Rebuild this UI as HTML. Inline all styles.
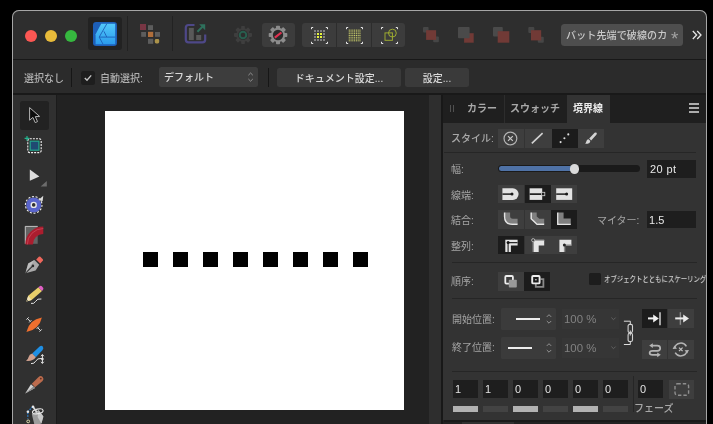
<!DOCTYPE html>
<html lang="ja">
<head>
<meta charset="utf-8">
<title>Affinity Designer</title>
<style>
html,body{margin:0;padding:0;background:#000;}
body{width:713px;height:424px;overflow:hidden;position:relative;font-family:"Liberation Sans","Noto Sans CJK JP",sans-serif;font-size:10px;color:#b8b8b8;-webkit-font-smoothing:antialiased;}
.abs,.abs *{position:absolute;box-sizing:border-box;}
.t{white-space:nowrap;line-height:14px;height:14px;}
#win{left:12px;top:10px;width:695px;height:430px;border-radius:7px 7px 0 0;background:#2d2d2d;overflow:hidden;}
#winborder{left:12px;top:10px;width:695px;height:430px;border-radius:7px 7px 0 0;border:1px solid #a6a6a6;border-bottom:none;pointer-events:none;}
/* coordinates inside #win are page coords minus (12,10) : use wrapper shifted */
#in{left:-12px;top:-10px;width:713px;height:424px;}
.t{will-change:transform;font-weight:500;}
.btn{background:#3e3e3e;}
.btn.on{background:#1c1c1c;}
.inp{background:#1e1e1e;color:#e6e6e6;font-size:12px;}
.lab{color:#b0b0b0;font-size:10px;}
.lab2{color:#a4a4a4;font-size:10px;font-weight:400 !important;}
.sep{background:#262626;height:1px;}
svg{position:absolute;overflow:visible;}
</style>
</head>
<body>
<div class="abs" id="win"><div id="in">

<!-- ===== title / toolbar ===== -->
<div id="titlebar" style="left:12px;top:10px;width:695px;height:49px;background:#2e2e2e;"></div>
<div style="left:12px;top:59px;width:695px;height:1px;background:#181818;"></div>
<div id="ctxbar" style="left:12px;top:60px;width:695px;height:33px;background:#2b2b2b;"></div>
<div style="left:12px;top:93px;width:695px;height:2px;background:#191919;"></div>

<!-- traffic lights -->
<div style="left:25px;top:30px;width:12px;height:12px;border-radius:50%;background:#fc5753;"></div>
<div style="left:45px;top:30px;width:12px;height:12px;border-radius:50%;background:#e8bb3a;"></div>
<div style="left:65px;top:30px;width:12px;height:12px;border-radius:50%;background:#36b83f;"></div>

<!-- persona: designer (active) -->
<div style="left:88px;top:17px;width:34px;height:33px;background:#222;border-radius:3px;"></div>
<svg style="left:93px;top:22px;" width="24" height="24" viewBox="0 0 24 24">
  <defs><linearGradient id="dg" x1="0" y1="0" x2="0" y2="1"><stop offset="0" stop-color="#52c8fa"/><stop offset="1" stop-color="#2b9cec"/></linearGradient></defs>
  <rect x="0" y="0" width="24" height="24" rx="3.2" fill="#1d5fb8"/>
  <path d="M8.2 1.8 H22.2 V22.2 H2.6 V12.3 Z" fill="url(#dg)"/>
  <path d="M13.8 1.8 L6.2 15.1 L10 22.2 M6.2 15.1 H22.2 M10.9 9.3 L13.8 15.1" stroke="#1d5fb8" stroke-width="0.9" fill="none"/>
</svg>
<div style="left:127px;top:16px;width:1px;height:35px;background:#222;"></div>

<!-- persona: pixel -->
<svg style="left:140px;top:24px;opacity:0.85;" width="21" height="20" viewBox="0 0 21 20">
  <rect x="0" y="0" width="6" height="6" fill="#863848"/>
  <rect x="8" y="1.2" width="5" height="4.8" fill="#666"/>
  <rect x="1.2" y="8" width="4.8" height="4.8" fill="#666"/>
  <rect x="8" y="7.8" width="5.2" height="5.2" fill="#c67a3e"/>
  <rect x="15" y="8" width="5" height="4.8" fill="#666"/>
  <rect x="8" y="14.8" width="5.2" height="5" fill="#666"/>
  <rect x="14.8" y="15" width="4.4" height="4.4" rx="1.4" fill="#c2a550"/>
</svg>
<div style="left:172px;top:16px;width:1px;height:35px;background:#222;"></div>

<!-- persona: export -->
<svg style="left:184px;top:23px;opacity:0.72;" width="24" height="22" viewBox="0 0 24 22">
  <path d="M10.5 2 H4.5 Q1.8 2 1.8 4.8 V16.6 Q1.8 19.4 4.5 19.4 H18.5 Q21.2 19.4 21.2 16.6 V11.5" fill="none" stroke="#5b52ab" stroke-width="2.2"/>
  <rect x="4.9" y="4.9" width="4.9" height="12.2" fill="#6a6a6a"/>
  <rect x="12.2" y="12" width="5" height="5.1" fill="#6a6a6a"/>
  <path d="M13.4 8.8 L19.6 2.6" stroke="#2f8a6e" stroke-width="2"/>
  <path d="M15.2 1.2 H21.2 V7.2 Z" fill="#2f8a6e"/>
</svg>

<!-- gear 1 (dim) -->
<svg style="left:233px;top:25px;" width="20" height="20" viewBox="-10 -10 20 20">
  <g fill="#3e3e3e">
    <circle r="6.8"/>
    <g id="teeth1"><rect x="-1.9" y="-9" width="3.8" height="18" rx="0.8"/><rect x="-1.9" y="-9" width="3.8" height="18" rx="0.8" transform="rotate(45)"/><rect x="-1.9" y="-9" width="3.8" height="18" rx="0.8" transform="rotate(90)"/><rect x="-1.9" y="-9" width="3.8" height="18" rx="0.8" transform="rotate(135)"/></g>
  </g>
  <circle r="5" fill="#2d2d2d"/>
  <circle r="3.3" fill="none" stroke="#285e4e" stroke-width="2"/>
</svg>

<!-- gear 2 button -->
<div style="left:262px;top:23px;width:33px;height:24px;background:#3c3c3c;border-radius:3px;"></div>
<svg style="left:268px;top:25px;" width="20" height="20" viewBox="-10 -10 20 20">
  <g fill="#8c8c8c">
    <circle r="7.2"/>
    <rect x="-2" y="-9.3" width="4" height="18.6" rx="0.8"/><rect x="-2" y="-9.3" width="4" height="18.6" rx="0.8" transform="rotate(45)"/><rect x="-2" y="-9.3" width="4" height="18.6" rx="0.8" transform="rotate(90)"/><rect x="-2" y="-9.3" width="4" height="18.6" rx="0.8" transform="rotate(135)"/>
  </g>
  <circle r="5.2" fill="#2a2a2a"/>
  <path d="M-3.2 2.7 L3.4 -2.5" stroke="#e03050" stroke-width="2.2"/>
</svg>

<!-- snapping group -->
<div style="left:302px;top:23px;width:103px;height:24px;background:#3c3c3c;border-radius:3px;"></div>
<div style="left:336px;top:23px;width:1px;height:24px;background:#2d2d2d;"></div>
<div style="left:371px;top:23px;width:1px;height:24px;background:#2d2d2d;"></div>
<svg style="left:311px;top:27px;" width="17" height="17" viewBox="0 0 17 17">
  <path d="M0.5 2.2 V0.5 H2.2 M14.8 0.5 H16.5 V2.2 M16.5 14.8 V16.5 H14.8 M2.2 16.5 H0.5 V14.8" stroke="#e8e8e8" stroke-width="1" fill="none"/>
  <rect x="3" y="3" width="2" height="2" fill="#808080"/><rect x="6" y="3" width="2" height="2" fill="#808080"/><rect x="9" y="3" width="2" height="2" fill="#808080"/><rect x="12" y="3" width="2" height="2" fill="#808080"/><rect x="3" y="6" width="2" height="2" fill="#808080"/><rect x="6" y="6" width="2" height="2" fill="#e4f23c"/><rect x="9" y="6" width="2" height="2" fill="#e4f23c"/><rect x="12" y="6" width="2" height="2" fill="#808080"/><rect x="3" y="9" width="2" height="2" fill="#808080"/><rect x="6" y="9" width="2" height="2" fill="#e4f23c"/><rect x="9" y="9" width="2" height="2" fill="#e4f23c"/><rect x="12" y="9" width="2" height="2" fill="#808080"/><rect x="3" y="12" width="2" height="2" fill="#808080"/><rect x="6" y="12" width="2" height="2" fill="#808080"/><rect x="9" y="12" width="2" height="2" fill="#808080"/><rect x="12" y="12" width="2" height="2" fill="#808080"/>
</svg>
<svg style="left:346px;top:27px;" width="17" height="17" viewBox="0 0 17 17">
  <path d="M0.5 2.2 V0.5 H2.2 M14.8 0.5 H16.5 V2.2 M16.5 14.8 V16.5 H14.8 M2.2 16.5 H0.5 V14.8" stroke="#e8e8e8" stroke-width="1" fill="none"/>
  <g fill="#d4d86e"><rect x="2.75" y="2.60" width="1.05" height="1.05"/><rect x="4.53" y="2.60" width="1.05" height="1.05"/><rect x="6.31" y="2.60" width="1.05" height="1.05"/><rect x="8.09" y="2.60" width="1.05" height="1.05"/><rect x="9.87" y="2.60" width="1.05" height="1.05"/><rect x="11.65" y="2.60" width="1.05" height="1.05"/><rect x="13.43" y="2.60" width="1.05" height="1.05"/><rect x="2.75" y="4.38" width="1.05" height="1.05"/><rect x="4.53" y="4.38" width="1.05" height="1.05"/><rect x="6.31" y="4.38" width="1.05" height="1.05"/><rect x="8.09" y="4.38" width="1.05" height="1.05"/><rect x="9.87" y="4.38" width="1.05" height="1.05"/><rect x="11.65" y="4.38" width="1.05" height="1.05"/><rect x="13.43" y="4.38" width="1.05" height="1.05"/><rect x="2.75" y="6.16" width="1.05" height="1.05"/><rect x="4.53" y="6.16" width="1.05" height="1.05"/><rect x="6.31" y="6.16" width="1.05" height="1.05"/><rect x="8.09" y="6.16" width="1.05" height="1.05"/><rect x="9.87" y="6.16" width="1.05" height="1.05"/><rect x="11.65" y="6.16" width="1.05" height="1.05"/><rect x="13.43" y="6.16" width="1.05" height="1.05"/><rect x="2.75" y="7.94" width="1.05" height="1.05"/><rect x="4.53" y="7.94" width="1.05" height="1.05"/><rect x="6.31" y="7.94" width="1.05" height="1.05"/><rect x="8.09" y="7.94" width="1.05" height="1.05"/><rect x="9.87" y="7.94" width="1.05" height="1.05"/><rect x="11.65" y="7.94" width="1.05" height="1.05"/><rect x="13.43" y="7.94" width="1.05" height="1.05"/><rect x="2.75" y="9.72" width="1.05" height="1.05"/><rect x="4.53" y="9.72" width="1.05" height="1.05"/><rect x="6.31" y="9.72" width="1.05" height="1.05"/><rect x="8.09" y="9.72" width="1.05" height="1.05"/><rect x="9.87" y="9.72" width="1.05" height="1.05"/><rect x="11.65" y="9.72" width="1.05" height="1.05"/><rect x="13.43" y="9.72" width="1.05" height="1.05"/><rect x="2.75" y="11.50" width="1.05" height="1.05"/><rect x="4.53" y="11.50" width="1.05" height="1.05"/><rect x="6.31" y="11.50" width="1.05" height="1.05"/><rect x="8.09" y="11.50" width="1.05" height="1.05"/><rect x="9.87" y="11.50" width="1.05" height="1.05"/><rect x="11.65" y="11.50" width="1.05" height="1.05"/><rect x="13.43" y="11.50" width="1.05" height="1.05"/><rect x="2.75" y="13.28" width="1.05" height="1.05"/><rect x="4.53" y="13.28" width="1.05" height="1.05"/><rect x="6.31" y="13.28" width="1.05" height="1.05"/><rect x="8.09" y="13.28" width="1.05" height="1.05"/><rect x="9.87" y="13.28" width="1.05" height="1.05"/><rect x="11.65" y="13.28" width="1.05" height="1.05"/><rect x="13.43" y="13.28" width="1.05" height="1.05"/></g>
</svg>
<svg style="left:380.5px;top:27px;" width="17" height="17" viewBox="0 0 17 17">
  <path d="M0.5 2.2 V0.5 H2.2 M14.8 0.5 H16.5 V2.2 M16.5 14.8 V16.5 H14.8 M2.2 16.5 H0.5 V14.8" stroke="#e8e8e8" stroke-width="1" fill="none"/>
  <rect x="4" y="5.9" width="7.4" height="7.4" fill="none" stroke="#a0ae30" stroke-width="0.95"/>
  <circle cx="11.4" cy="6.1" r="3.9" fill="none" stroke="#a0ae30" stroke-width="0.95"/>
</svg>

<!-- arrange icons (dim) -->
<svg style="left:423px;top:27px;" width="17" height="16" viewBox="0 0 17 16">
  <rect x="0" y="0" width="5.6" height="5.6" rx="1" fill="#464646"/><rect x="10.2" y="9.6" width="5.7" height="5.7" rx="1" fill="#464646"/>
  <rect x="3.1" y="3.2" width="10" height="9.7" fill="#713a36"/>
</svg>
<svg style="left:458px;top:27px;" width="17" height="16" viewBox="0 0 17 16">
  <rect x="6.1" y="6.2" width="9.6" height="9.5" fill="#713a36"/>
  <rect x="0" y="0" width="11.6" height="11.2" rx="1" fill="#4a4a4a"/>
</svg>
<svg style="left:493px;top:27px;" width="17" height="16" viewBox="0 0 17 16">
  <rect x="0" y="0" width="9.8" height="9.6" rx="1" fill="#4a4a4a"/>
  <rect x="4.7" y="4.2" width="11.6" height="11.5" fill="#713a36"/>
</svg>
<svg style="left:528px;top:27px;" width="17" height="16" viewBox="0 0 17 16">
  <rect x="0.3" y="0" width="6" height="6" rx="1" fill="#464646"/><rect x="9.8" y="9.8" width="6" height="6" rx="1" fill="#464646"/>
  <rect x="3" y="3.2" width="10.2" height="10.2" fill="#713a36"/>
</svg>

<!-- title pill -->
<div style="left:561px;top:24px;width:122px;height:22px;background:#4e4e4e;border-radius:3.5px;"></div>
<div class="t" style="left:565.8px;top:28.9px;font-size:10px;letter-spacing:0.14px;color:#cacaca;">バット先端で破線のカ</div>
<div class="t" style="left:671.2px;top:28.8px;font-size:19px;line-height:19px;height:19px;font-weight:400;color:#a2a2a2;">*</div>
<svg style="left:692px;top:30px;" width="10" height="10" viewBox="0 0 10 10"><path d="M0.8 1 L4.6 5 L0.8 9 M5.2 1 L9 5 L5.2 9" stroke="#e6e6e6" stroke-width="1.3" fill="none"/></svg>

<!-- ===== context toolbar ===== -->
<div class="t lab" style="left:24px;top:71.7px;">選択なし</div>
<div style="left:71px;top:68px;width:1px;height:18.5px;background:#161616;"></div>
<div style="left:80.7px;top:70.8px;width:14px;height:13.8px;background:#1e1e1e;border-radius:2.5px;"></div>
<svg style="left:80.7px;top:70.8px;" width="14" height="14" viewBox="0 0 14 14"><path d="M3.8 7 L6 9.2 L10.2 4.4" stroke="#c4c4c4" stroke-width="1.4" fill="none"/></svg>
<div class="t lab" style="left:100.4px;top:71.7px;">自動選択:</div>
<div style="left:158.8px;top:66.5px;width:99px;height:20px;background:#3d3d3d;border-radius:2.5px;"></div>
<div class="t" style="left:164px;top:70.5px;color:#d8d8d8;">デフォルト</div>
<svg style="left:246px;top:70px;" width="9" height="14" viewBox="0 0 9 14"><path d="M2.4 5.2 L4.6 3 L6.8 5.2 M2.4 9 L4.6 11.2 L6.8 9" stroke="#9a9a9a" stroke-width="0.9" fill="none"/></svg>
<div style="left:268px;top:68px;width:1px;height:18.5px;background:#161616;"></div>
<div style="left:277px;top:67.5px;width:124px;height:19px;background:#3a3a3a;border-radius:2.5px;"></div>
<div class="t" style="left:277px;top:72px;width:124px;text-align:center;color:#d8d8d8;">ドキュメント設定...</div>
<div style="left:405px;top:67.5px;width:64px;height:19px;background:#3a3a3a;border-radius:2.5px;"></div>
<div class="t" style="left:405px;top:72px;width:64px;text-align:center;color:#d8d8d8;">設定...</div>

<!-- ===== main area ===== -->
<div id="workspace" style="left:12px;top:95px;width:695px;height:335px;background:#222;"></div>
<div id="tools" style="left:13px;top:95px;width:43px;height:335px;background:#303030;"></div>
<div style="left:56px;top:95px;width:1px;height:335px;background:#1b1b1b;"></div>
<div id="artboard" style="left:105px;top:110.5px;width:299.3px;height:299.2px;background:#fff;"></div>
<div id="dashes" style="left:142.7px;top:252px;width:226px;height:15.1px;background:repeating-linear-gradient(90deg,#000 0,#000 15.1px,transparent 15.1px,transparent 30px);"></div>
<div style="left:429px;top:95px;width:12px;height:335px;background:#2e2e2e;"></div>
<div style="left:441px;top:95px;width:2px;height:335px;background:#181818;"></div>

<!-- TOOLS -->
<div style="left:20px;top:101px;width:28.5px;height:28.5px;background:#222;border-radius:2.5px;"></div>
<svg style="left:26px;top:104px;" width="18" height="22" viewBox="0 0 18 22">
  <path d="M3.6 3.6 V16.2 L6.9 13.4 L9.2 18.6 L11.5 17.6 L9.3 12.6 L13.6 12.4 Z" fill="#0c0c0c" stroke="#b4b4b4" stroke-width="1" stroke-linejoin="round"/>
</svg>
<svg style="left:24px;top:135px;" width="19" height="19" viewBox="0 0 19 19">
  <rect x="3.8" y="3.8" width="13.4" height="13.8" rx="2" fill="none" stroke="#f0f0f0" stroke-width="1.1" stroke-dasharray="2 1.1"/>
  <rect x="6.2" y="6.2" width="8.7" height="9" fill="#1f4a72" stroke="#23a58c" stroke-width="1.2"/>
  <path d="M0.6 3.4 H5.4 M3 1 V5.8" stroke="#23b48e" stroke-width="1.2"/>
</svg>
<svg style="left:26px;top:166px;" width="22" height="22" viewBox="0 0 22 22">
  <path d="M3.8 3.6 V14.8 L13.4 10.4 Z" fill="#dedede"/>
  <path d="M20.8 15 V20.6 H14.6 Z" fill="#6c6c6c"/>
</svg>
<svg style="left:24px;top:194px;" width="22" height="22" viewBox="0 0 22 22">
  <circle cx="9.7" cy="10.9" r="7.5" fill="#5a65cc"/>
  <circle cx="9.7" cy="10.9" r="8.3" fill="none" stroke="#ececec" stroke-width="1.1" stroke-dasharray="2.1 1.6"/>
  <circle cx="9.7" cy="10.9" r="2.5" fill="#303030" stroke="#e8e8e8" stroke-width="1.4"/>
  <path d="M14.4 5.9 L19.3 1.7 L18.6 7.3 Z" fill="#dcdcdc"/>
</svg>
<svg style="left:24px;top:225px;" width="21" height="21" viewBox="0 0 21 21">
  <rect x="0.9" y="1" width="12.8" height="17.8" fill="#636363"/>
  <path d="M1.3 18.8 V1.4 H13.7" stroke="#c8c8c8" stroke-width="0.9" fill="none"/>
  <path d="M5.1 19.5 A14.2 14.2 0 0 1 19.3 5.3" stroke="#ab1d2e" stroke-width="7.5" fill="none"/>
  <path d="M3.3 19.5 A16 16 0 0 1 19.3 3.5" stroke="#d4586a" stroke-width="0.8" fill="none" opacity="0.75"/>
</svg>
<!-- pen -->
<svg style="left:24px;top:255px;" width="21" height="20" viewBox="0 0 21 20">
  <path d="M1.4 18.2 L4.2 8.6 L10.4 5 L15.2 9.8 L11.6 15.6 Z" fill="#a9a9a9"/>
  <path d="M1.4 18.2 L8.6 11.2" stroke="#2c2c2c" stroke-width="1.1"/>
  <circle cx="8.9" cy="10.9" r="1.3" fill="#2c2c2c"/>
  <path d="M1.4 18.2 L4.2 8.6 L10.4 5 Z" fill="#cfcfcf" opacity="0.55"/>
  <path d="M12.2 4.4 L14.8 1.8 Q15.6 1.2 16.4 1.8 L18.8 4.2 Q19.4 5 18.8 5.8 L16.2 8.4 Z" fill="#ee675c"/>
</svg>
<!-- pencil -->
<svg style="left:24px;top:284px;" width="22" height="22" viewBox="0 0 22 22">
  <path d="M2.4 17.6 L4.2 11.8 L14.4 3.2 L18 7 L7.6 16 Z" fill="#e8cf6a"/>
  <path d="M2.4 17.6 L4.2 11.8 L7.6 16 Z" fill="#f1e3b8"/>
  <path d="M2.4 17.6 L3 15.6 L4.2 17 Z" fill="#555"/>
  <path d="M14.4 3.2 L16 1.9 Q17 1.4 17.9 2.3 L19.1 3.7 Q19.8 4.8 19 5.8 L18 7 Z" fill="#e05fc6"/>
  <path d="M7 19.4 Q10 20.2 11.6 17.4 Q13.2 14.2 17.4 15" stroke="#e4e4e4" stroke-width="1" fill="none"/>
</svg>
<!-- vector brush -->
<svg style="left:24px;top:314px;" width="22" height="22" viewBox="0 0 22 22">
  <path d="M2.4 17.9 Q5.2 5.4 17.9 3.4 Q15 15.8 2.4 17.9 Z" fill="#ee6f2e"/>
  <path d="M3.4 4.4 L6.2 7.4 M2.4 5.6 L4.6 3.4 M5.2 8.4 L7.4 6.2 M13.7 13.6 L16.5 16.6 M12.7 14.8 L14.9 12.6 M15.5 17.6 L17.7 15.4" stroke="#e2e2e2" stroke-width="1" fill="none"/>
</svg>
<!-- paint brush -->
<svg style="left:24px;top:344px;" width="23" height="22" viewBox="0 0 23 22">
  <path d="M8.2 9.6 L15.6 2.4 Q17.4 1 18.8 2.6 Q20 4.2 18.6 6 L11.8 13.2 Z" fill="#1f8fe4"/>
  <path d="M8.2 9.6 L11.8 13.2 Q8.6 17.6 2 16.8 Q4.2 15.4 4.6 13 Q5.2 10.2 8.2 9.6 Z" fill="#cfa08e"/>
  <path d="M7 19.6 Q10.4 20 11.6 17.2 Q13 14 18.2 14.4" stroke="#e4e4e4" stroke-width="1" fill="none"/>
  <path d="M18.4 10.6 V19.4 M17 12.2 L18.4 10.6 L19.8 12.2 M17 17.8 L18.4 19.4 L19.8 17.8" stroke="#e4e4e4" stroke-width="1" fill="none"/>
  <circle cx="18.4" cy="15" r="1.3" fill="#e4e4e4"/>
</svg>
<!-- knife -->
<svg style="left:24px;top:375px;" width="22" height="20" viewBox="0 0 22 20">
  <path d="M7.8 8.8 L14.6 2 Q16.6 0.2 18.6 2 Q20.4 4 18.6 6 L11 12.2 Z" fill="#bb6b4d"/>
  <circle cx="16.8" cy="3.6" r="0.9" fill="#5e3020"/>
  <path d="M7 9.2 L11 13 L1.2 18.4 Z" fill="#d0d0d0"/>
  <path d="M1.2 18.4 L11 13 L9.4 11.4 Z" fill="#8a8a8a"/>
</svg>
<!-- fill -->
<svg style="left:24px;top:404px;" width="24" height="22" viewBox="0 0 24 22">
  <path d="M7.8 10 L14.6 6 L19.4 12.6 L17.4 19.6 L10.6 21.5 Z" fill="#9c9c9c"/>
  <path d="M14.6 6 L19.4 12.6 L17.4 19.6 L13.6 13 Z" fill="#c8c8c8"/>
  <ellipse cx="13.8" cy="7.4" rx="5.4" ry="2.3" transform="rotate(-12 13.8 7.4)" fill="none" stroke="#e8e8e8" stroke-width="1.1"/>
  <path d="M9 2.8 L13 8.6" stroke="#d8d8d8" stroke-width="1.8"/>
  <path d="M8.6 3 L3.8 7.6 V14.6" stroke="#2b84d8" stroke-width="1.3" fill="none" stroke-dasharray="1.5 1.1"/>
  <circle cx="9" cy="2.8" r="1.3" fill="#e6e6e6"/><circle cx="3.9" cy="7.8" r="1.3" fill="#e6e6e6"/>
  <circle cx="4.2" cy="17.4" r="1.4" fill="none" stroke="#e0dcb0" stroke-width="1"/>
</svg>

<!-- ===== right panel ===== -->
<div id="panel" style="left:443px;top:95px;width:263.5px;height:325px;background:#333;"></div>
<div id="tabbar" style="left:443px;top:95px;width:263.5px;height:27.5px;background:#1f1f1f;"></div>
<div style="left:450px;top:105.2px;width:1px;height:7.3px;background:#505050;"></div>
<div style="left:453px;top:105.2px;width:1px;height:7.3px;background:#505050;"></div>
<div class="t" style="left:467px;top:102px;color:#a8a8a8;font-weight:700;">カラー</div>
<div style="left:503.5px;top:95px;width:1px;height:27.5px;background:#2d2d2d;"></div>
<div class="t" style="left:510px;top:102px;color:#a8a8a8;font-weight:700;">スウォッチ</div>
<div style="left:567.3px;top:95px;width:42.3px;height:28px;background:#333;"></div>
<div class="t" style="left:573px;top:102px;color:#ececec;font-weight:bold;">境界線</div>
<div style="left:689px;top:103px;width:10.4px;height:1.7px;background:#acacac;"></div>
<div style="left:689px;top:107px;width:10.4px;height:1.7px;background:#acacac;"></div>
<div style="left:689px;top:111px;width:10.4px;height:1.7px;background:#acacac;"></div>
<div style="left:443.5px;top:420px;width:263px;height:10px;background:#1a1a1a;"></div>
<div style="left:443.5px;top:421.6px;width:263px;height:8px;background:#222;"></div>
<div style="left:462px;top:421.6px;width:52px;height:8px;background:#303030;"></div>

<!-- style row -->
<div class="t lab" style="left:451.2px;top:132px;color:#a8a8a8;">スタイル:</div>
<div class="btn" style="left:498.1px;top:129.3px;width:26.3px;height:18.4px;"></div>
<div class="btn" style="left:525px;top:129.3px;width:26.5px;height:18.4px;"></div>
<div class="btn on" style="left:551.8px;top:129.3px;width:26.2px;height:18.4px;"></div>
<div class="btn" style="left:578.4px;top:129.3px;width:26px;height:18.4px;"></div>
<svg style="left:498px;top:129.3px;" width="107" height="18.4" viewBox="0 0 107 18.4">
  <circle cx="12.4" cy="9.5" r="6.4" fill="none" stroke="#b2b2b2" stroke-width="1.2"/>
  <path d="M10 7.1 L14.8 11.9 M14.8 7.1 L10 11.9" stroke="#c8c8c8" stroke-width="1.2"/>
  <path d="M33.8 14.4 L44.6 4.2" stroke="#d2d2d2" stroke-width="1.6"/>
  <circle cx="62.6" cy="13.1" r="1.05" fill="#dcdcdc"/><circle cx="66.4" cy="9.3" r="1.05" fill="#dcdcdc"/><circle cx="70.3" cy="5.4" r="1.05" fill="#dcdcdc"/>
  <path d="M87.2 14.4 Q88.2 13.8 88.4 12.2 Q88.8 10.4 90.6 10.2 L92.4 12 Q92 14.4 89.6 14.8 Q88.2 15 87.2 14.4 Z M91.2 9.4 L96.6 3.8 Q97.8 3 98.6 3.8 Q99.2 4.6 98.4 5.8 L93.2 11.4 Z" fill="#d4d4d4"/>
</svg>
<div class="sep" style="left:444px;top:151.6px;width:252.4px;"></div>

<!-- width row -->
<div class="t lab2" style="left:451.2px;top:163px;">幅:</div>
<div style="left:497.5px;top:165px;width:142.5px;height:7px;border-radius:3.5px;background:#1a1a1a;"></div>
<div style="left:498.5px;top:166px;width:76px;height:5px;border-radius:2.5px;background:#4f72a6;"></div>
<div style="left:569.8px;top:164.2px;width:9.4px;height:9.4px;border-radius:50%;background:#dadada;"></div>
<div class="inp" style="left:647px;top:160px;width:49.3px;height:17.8px;"></div>
<div class="t" style="left:649.5px;top:162.2px;font-size:11px;letter-spacing:0.4px;font-weight:400;color:#e8e8e8;">20 pt</div>

<!-- cap row -->
<div class="t lab2" style="left:451.2px;top:188.6px;">線端:</div>
<div class="btn" style="left:498px;top:185.2px;width:26px;height:18.3px;"></div>
<div class="btn on" style="left:524.6px;top:185.2px;width:26px;height:18.3px;"></div>
<div class="btn" style="left:551.2px;top:185.2px;width:26px;height:18.3px;"></div>
<svg style="left:498px;top:185.2px;" width="80" height="18.3" viewBox="0 0 80 18.3">
  <path d="M4.4 3.3 H14.8 A5.8 5.8 0 0 1 14.8 14.9 H4.4 Z" fill="#e2e2e2"/>
  <path d="M4.4 9.1 H14" stroke="#3a3a3a" stroke-width="1.6"/><circle cx="14" cy="9.1" r="1.5" fill="#1a1a1a"/>
  <rect x="31.6" y="3.3" width="12.6" height="11.6" fill="#e2e2e2"/>
  <path d="M31.6 9.1 H44" stroke="#222" stroke-width="1.6"/><rect x="43.4" y="7.3" width="3.4" height="3.4" fill="#1c1c1c" stroke="#d0d0d0" stroke-width="0.8"/>
  <rect x="58.2" y="3.3" width="16" height="11.6" fill="#e2e2e2"/>
  <path d="M58.2 9.1 H68.6" stroke="#3a3a3a" stroke-width="1.6"/><circle cx="68.6" cy="9.1" r="1.5" fill="#1a1a1a"/>
</svg>

<!-- join row -->
<div class="t lab2" style="left:451.2px;top:214.3px;">結合:</div>
<div class="btn" style="left:498px;top:210.3px;width:26px;height:18.3px;"></div>
<div class="btn" style="left:524.6px;top:210.3px;width:26px;height:18.3px;"></div>
<div class="btn on" style="left:551.2px;top:210.3px;width:26px;height:18.3px;"></div>
<svg style="left:498px;top:210.3px;" width="80" height="18.3" viewBox="0 0 80 18.3">
  <path d="M9.6 2.4 V6 Q9.6 11.2 14.8 11.2 H19.6" stroke="#808080" stroke-width="5" fill="none"/>
  <path d="M6.6 2.4 V6.4 Q6.6 14.2 14.4 14.2 H19.6" stroke="#e4e4e4" stroke-width="1.5" fill="none"/>
  <path d="M36.2 2.4 V7.6 L40.2 11.2 H46.2" stroke="#808080" stroke-width="5" fill="none" stroke-linejoin="bevel"/>
  <path d="M33.2 2.4 V8.8 L39 14.2 H46.2" stroke="#e4e4e4" stroke-width="1.5" fill="none"/>
  <path d="M63 2.4 V11 H72.8" stroke="#808080" stroke-width="5.2" fill="none"/>
  <path d="M59.8 2.4 V14.2 H72.8" stroke="#e4e4e4" stroke-width="1.5" fill="none"/>
</svg>
<div class="t lab2" style="left:597px;top:214px;">マイター:</div>
<div class="inp" style="left:647px;top:210.7px;width:49.3px;height:17.8px;"></div>
<div class="t" style="left:648.6px;top:213.2px;font-size:11px;letter-spacing:0.1px;font-weight:400;color:#e8e8e8;">1.5</div>

<!-- align row -->
<div class="t lab2" style="left:451.2px;top:240.1px;">整列:</div>
<div class="btn on" style="left:498px;top:236.2px;width:26px;height:18.3px;"></div>
<div class="btn" style="left:524.6px;top:236.2px;width:26px;height:18.3px;"></div>
<div class="btn" style="left:551.2px;top:236.2px;width:26px;height:18.3px;"></div>
<svg style="left:498px;top:236.2px;" width="80" height="18.3" viewBox="0 0 80 18.3">
  <path d="M10.1 16 V6.6 H19.6" stroke="#e4e4e4" stroke-width="5.6" fill="none"/>
  <path d="M10.1 16 V6.6 H19.6" stroke="#2a2a2a" stroke-width="1.2" fill="none"/><circle cx="10.1" cy="6.6" r="1.5" fill="#111"/>
  <path d="M38 16 V6.8 H46.2" stroke="#e4e4e4" stroke-width="5.4" fill="none"/>
  <path d="M35.2 16 V4.2 H46.2" stroke="#8c8c8c" stroke-width="1.3" fill="none"/>
  <circle cx="35.2" cy="4.2" r="1.6" fill="#3e3e3e" stroke="#c8c8c8" stroke-width="0.8"/>
  <path d="M64.2 16 V6.6 H73.4" stroke="#e4e4e4" stroke-width="5.6" fill="none"/>
  <path d="M66.6 16 V9.2 H73.4" stroke="#8a8a8a" stroke-width="1.4" fill="none"/><circle cx="66.4" cy="9" r="1.5" fill="#222"/>
</svg>
<div class="sep" style="left:451.5px;top:262px;width:245px;"></div>

<!-- order row -->
<div class="t lab2" style="left:451.2px;top:275.3px;">順序:</div>
<div class="btn" style="left:498px;top:272.2px;width:25.8px;height:18.6px;"></div>
<div class="btn on" style="left:524.2px;top:272.2px;width:25.8px;height:18.6px;"></div>
<svg style="left:498px;top:272.2px;" width="53" height="18.6" viewBox="0 0 53 18.6">
  <rect x="7.3" y="4" width="7.6" height="7.6" rx="1" fill="none" stroke="#ececec" stroke-width="1.8"/>
  <rect x="10.8" y="7.7" width="8" height="7.8" rx="0.8" fill="#9a9a9a"/>
  <path d="M42.6 7.2 H45.4 V14.8 H37.8 V12" stroke="#8a8a8a" stroke-width="1.8" fill="none"/>
  <rect x="34.2" y="4" width="7.4" height="7.4" rx="0.9" fill="#1c1c1c" stroke="#ececec" stroke-width="1.9"/>
  <rect x="37.2" y="7" width="1.4" height="1.4" fill="#cfcfcf"/>
</svg>
<div style="left:589px;top:272.6px;width:12px;height:12px;background:#1d1d1d;border-radius:1.5px;"></div>
<div class="t" style="left:604.3px;top:272.9px;font-size:7.5px;transform:scaleX(0.852);transform-origin:0 0;color:#cfcfcf;">オブジェクトとともにスケーリング</div>
<div class="sep" style="left:451.5px;top:297.7px;width:245px;"></div>

<!-- start / end rows -->
<div class="t lab2" style="left:451.6px;top:312.6px;">開始位置:</div>
<div style="left:501.3px;top:308px;width:54.4px;height:22px;background:#3b3b3b;border-radius:1.5px;"></div>
<div style="left:515.8px;top:318px;width:24.4px;height:2px;background:#ececec;"></div>
<svg style="left:544.6px;top:312px;" width="8" height="14" viewBox="0 0 8 14"><path d="M1.8 4.9 L4 2.7 L6.2 4.9 M1.8 9 L4 11.2 L6.2 9" stroke="#9c9c9c" stroke-width="0.9" fill="none"/></svg>
<div style="left:562px;top:309px;width:57px;height:20px;background:#363636;"></div>
<div class="t" style="left:564.3px;top:312.2px;font-size:11.4px;color:#828282;">100 %</div>
<svg style="left:610px;top:316px;" width="7" height="6" viewBox="0 0 7 6"><path d="M1.4 1.6 L3.5 3.7 L5.6 1.6" stroke="#666" stroke-width="0.9" fill="none"/></svg>

<div class="t lab2" style="left:451.6px;top:341.2px;">終了位置:</div>
<div style="left:501.3px;top:336.8px;width:54.4px;height:22px;background:#3b3b3b;border-radius:1.5px;"></div>
<div style="left:507.8px;top:346.8px;width:24.4px;height:2px;background:#ececec;"></div>
<svg style="left:544.6px;top:340.8px;" width="8" height="14" viewBox="0 0 8 14"><path d="M1.8 4.9 L4 2.7 L6.2 4.9 M1.8 9 L4 11.2 L6.2 9" stroke="#9c9c9c" stroke-width="0.9" fill="none"/></svg>
<div style="left:562px;top:337.8px;width:57px;height:20px;background:#363636;"></div>
<div class="t" style="left:564.3px;top:340.8px;font-size:11.4px;color:#828282;">100 %</div>
<svg style="left:610px;top:344.6px;" width="7" height="6" viewBox="0 0 7 6"><path d="M1.4 1.6 L3.5 3.7 L5.6 1.6" stroke="#666" stroke-width="0.9" fill="none"/></svg>

<!-- chain -->
<svg style="left:622px;top:319px;" width="13" height="28" viewBox="0 0 13 28">
  <path d="M1.9 2.2 H8.3 V5.4 M1.9 25.5 H8.3 V22.4" stroke="#dcdcdc" stroke-width="1" fill="none"/>
  <rect x="6.1" y="5.4" width="4.4" height="8.2" rx="1.6" fill="none" stroke="#d4d4d4" stroke-width="1.1"/>
  <rect x="6.1" y="14.3" width="4.4" height="8.2" rx="1.6" fill="none" stroke="#d4d4d4" stroke-width="1.1"/>
  <path d="M8.3 11.6 V16.4" stroke="#d4d4d4" stroke-width="1.1"/>
</svg>

<div class="btn on" style="left:642.2px;top:309px;width:25.2px;height:18.6px;"></div>
<div class="btn" style="left:668.4px;top:309px;width:25.6px;height:18.6px;"></div>
<div class="btn" style="left:642.2px;top:340px;width:25.2px;height:18.7px;"></div>
<div class="btn" style="left:668.4px;top:340px;width:25.6px;height:18.7px;"></div>
<svg style="left:642.2px;top:309px;" width="52" height="18.6" viewBox="0 0 52 18.6">
  <path d="M18 3.2 V16.2" stroke="#d0d0d0" stroke-width="1.5"/>
  <path d="M6 9.4 H13" stroke="#f0f0f0" stroke-width="2"/><path d="M11.2 5.4 L16.8 9.4 L11.2 13.4 Z" fill="#f0f0f0"/>
  <path d="M38.4 3.2 V15.8" stroke="#8e8e8e" stroke-width="1.4"/>
  <path d="M33.2 9.4 H43" stroke="#ececec" stroke-width="2"/><path d="M41.2 5.4 L47 9.4 L41.2 13.4 Z" fill="#ececec"/>
</svg>
<svg style="left:642.2px;top:340px;" width="52" height="18.7" viewBox="0 0 52 18.7">
  <path d="M9.4 5.6 H15.2 Q18.2 5.6 18.2 8.2 Q18.2 10.8 15.2 10.8 H10.6 Q7.6 10.8 7.6 13 Q7.6 14.8 10.6 14.8 H16.2" stroke="#b4b4b4" stroke-width="1.7" fill="none"/>
  <path d="M10.8 3.2 L7.2 5.6 L10.8 8 Z M15.2 12.4 L18.8 14.8 L15.2 17.2 Z" fill="#b4b4b4"/>
  <path d="M32.6 8 A6.4 6.4 0 0 1 44.4 6.4 M45 11 A6.4 6.4 0 0 1 33.2 12.6" stroke="#b4b4b4" stroke-width="1.5" fill="none"/>
  <path d="M30.6 9 L32.4 5.4 L35 8.8 Z M47 10 L45.2 13.6 L42.6 10.2 Z" fill="#b4b4b4"/>
  <path d="M37 7.6 L40.6 11.2 M40.6 7.6 L37 11.2" stroke="#c4c4c4" stroke-width="1.2"/>
</svg>
<div class="sep" style="left:451.5px;top:370.6px;width:245px;"></div>

<!-- dash pattern row -->
<div class="inp" style="left:452.6px;top:380px;width:25.6px;height:17.8px;"></div>
<div class="inp" style="left:482.8px;top:380px;width:25.4px;height:17.8px;"></div>
<div class="inp" style="left:512.8px;top:380px;width:25.4px;height:17.8px;"></div>
<div class="inp" style="left:542.9px;top:380px;width:25.3px;height:17.8px;"></div>
<div class="inp" style="left:572.9px;top:380px;width:25.3px;height:17.8px;"></div>
<div class="inp" style="left:603px;top:380px;width:25.2px;height:17.8px;"></div>
<div class="inp" style="left:637.8px;top:380px;width:25.3px;height:17.8px;"></div>
<div class="t" style="left:454.8px;top:381.8px;font-size:11px;font-weight:400;color:#e2e2e2;">1</div>
<div class="t" style="left:485.0px;top:381.8px;font-size:11px;font-weight:400;color:#e2e2e2;">1</div>
<div class="t" style="left:515.0px;top:381.8px;font-size:11px;font-weight:400;color:#e2e2e2;">0</div>
<div class="t" style="left:545.1px;top:381.8px;font-size:11px;font-weight:400;color:#e2e2e2;">0</div>
<div class="t" style="left:575.1px;top:381.8px;font-size:11px;font-weight:400;color:#e2e2e2;">0</div>
<div class="t" style="left:605.2px;top:381.8px;font-size:11px;font-weight:400;color:#e2e2e2;">0</div>
<div class="t" style="left:640.0px;top:381.8px;font-size:11px;font-weight:400;color:#e2e2e2;">0</div>
<div style="left:633.4px;top:376px;width:1px;height:36px;background:#262626;"></div>
<div class="btn" style="left:668.6px;top:380px;width:25.4px;height:19px;"></div>
<svg style="left:668.6px;top:380px;" width="25.4" height="19" viewBox="0 0 25.4 19"><rect x="6" y="3.8" width="13.6" height="11.4" rx="2.4" fill="none" stroke="#8e8e8e" stroke-width="1.4" stroke-dasharray="3.4 2"/></svg>
<div style="left:452.6px;top:405.8px;width:25.6px;height:6.2px;background:#b2b2b2;"></div>
<div style="left:482.8px;top:405.8px;width:25.4px;height:6.2px;background:#434343;"></div>
<div style="left:512.8px;top:405.8px;width:25.4px;height:6.2px;background:#b2b2b2;"></div>
<div style="left:542.9px;top:405.8px;width:25.3px;height:6.2px;background:#434343;"></div>
<div style="left:572.9px;top:405.8px;width:25.3px;height:6.2px;background:#b2b2b2;"></div>
<div style="left:603px;top:405.8px;width:25.2px;height:6.2px;background:#434343;"></div>
<div class="t lab" style="left:634.3px;top:402px;color:#a8a8a8;">フェーズ</div>

</div></div>
<div class="abs" id="winborder"></div>
</body>
</html>
